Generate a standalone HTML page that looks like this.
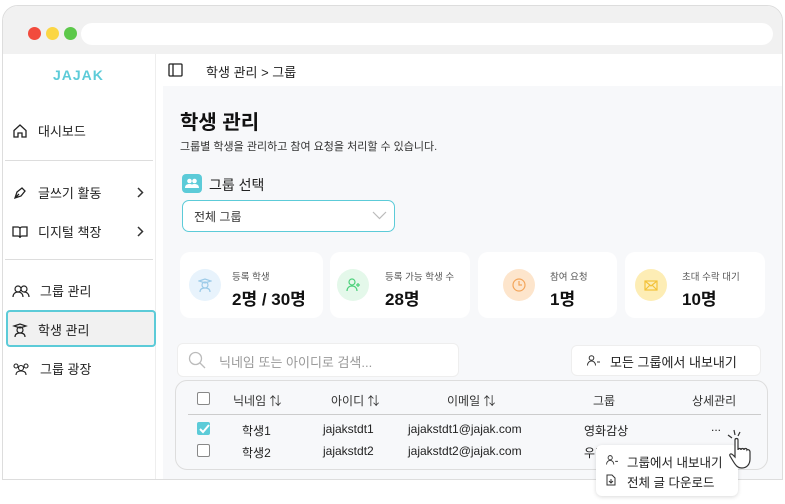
<!DOCTYPE html>
<html><head><meta charset="utf-8"><style>
*{box-sizing:border-box;margin:0;padding:0}
body{width:785px;height:504px;background:#fff;font-family:"Liberation Sans","Noto Sans CJK KR",sans-serif;position:relative;overflow:hidden;color:#222}
.abs{position:absolute}
.frame{left:2px;top:5px;width:781px;height:475px;border:1px solid #ddd;border-radius:16px 16px 0 0;overflow:hidden;background:#fff}
.tb{left:0;top:0;width:781px;height:48px;background:#f1f1f1}
.dot{width:13px;height:13px;border-radius:50%;top:21px}
.url{left:78px;top:17px;width:692px;height:22px;background:#fff;border-radius:11px}
.side{left:0;top:48px;width:153px;height:427px;background:#fff;border-right:1px solid #eee}
.main{left:160px;top:80px;width:621px;height:395px;background:#f7f8fa}
.nav{position:absolute;left:12px;font-size:13px;color:#222;display:flex;align-items:center;gap:10px}
.hr{position:absolute;left:5px;width:148px;height:1px;background:#ddd}
.card{background:#fff;border-radius:10px;height:66px;top:252px}
.ic{position:absolute;left:9px;top:17px;width:32px;height:32px;border-radius:50%}
.cl{position:absolute;left:52px;top:17px;font-size:9.5px;color:#555}
.cv{position:absolute;left:52px;top:33px;font-size:17px;font-weight:bold;color:#111}
.th{position:absolute;top:392px;font-size:12px;color:#333}
.td{position:absolute;font-size:12px;color:#222}
.cb{position:absolute;width:13px;height:13px;border:1px solid #888;border-radius:2px;background:#fff}
</style></head><body>
<div class="abs frame">
 <div class="abs tb"></div>
 <div class="abs dot" style="left:25px;background:#f24b3d"></div>
 <div class="abs dot" style="left:43px;background:#fbd644"></div>
 <div class="abs dot" style="left:61px;background:#5cc84a"></div>
 <div class="abs url"></div>
 <div class="abs side">
  <div class="abs" style="left:50px;top:13px;font-size:14px;font-weight:900;color:#5ccbd8;letter-spacing:1px">JAJAK</div>
 </div>
 <div class="abs main"></div>
</div>
<div class="nav" style="top:121px"><svg width="16" height="16" viewBox="0 0 16 16" fill="none" stroke="#222" stroke-width="1.3"><path d="M2 7.5 8 2l6 5.5V14H10V10H6v4H2z"/></svg>대시보드</div>
<div class="hr" style="top:160px"></div>
<div class="nav" style="top:183px"><svg width="16" height="16" viewBox="0 0 16 16" fill="none" stroke="#222" stroke-width="1.3"><path d="M3 13l2-6 5-4 3 3-4 5z M3 13l4-4"/></svg>글쓰기 활동</div>
<svg class="abs" style="left:137px;top:187px" width="7" height="11" viewBox="0 0 7 11" fill="none" stroke="#333" stroke-width="1.5"><path d="M1 1l4.5 4.5L1 10"/></svg>
<div class="nav" style="top:222px"><svg width="16" height="16" viewBox="0 0 16 16" fill="none" stroke="#222" stroke-width="1.3"><path d="M1 3h5a2 2 0 0 1 2 2v9a2 2 0 0 0-2-2H1zM15 3h-5a2 2 0 0 0-2 2v9a2 2 0 0 1 2-2h5z"/></svg>디지털 책장</div>
<svg class="abs" style="left:137px;top:226px" width="7" height="11" viewBox="0 0 7 11" fill="none" stroke="#333" stroke-width="1.5"><path d="M1 1l4.5 4.5L1 10"/></svg>
<div class="hr" style="top:259px"></div>
<div class="nav" style="top:281px"><svg width="18" height="16" viewBox="0 0 18 16" fill="none" stroke="#222" stroke-width="1.2"><circle cx="6" cy="6" r="3"/><circle cx="12" cy="6" r="3"/><path d="M1 14c0-3 2-5 5-5s5 2 5 5M12 9c3 0 5 2 5 5"/></svg>그룹 관리</div>
<div class="abs" style="left:6px;top:310px;width:150px;height:37px;background:#f1f1f1;border:2px solid #5ccbd8;border-radius:4px"></div>
<div class="nav" style="top:320px"><svg width="16" height="16" viewBox="0 0 16 16" fill="none" stroke="#222" stroke-width="1.2"><path d="M2 4l6-2 6 2-6 2z"/><circle cx="8" cy="8" r="3"/><path d="M3 15c0-3 2-4 5-4s5 1 5 4"/></svg>학생 관리</div>
<div class="nav" style="top:359px"><svg width="18" height="16" viewBox="0 0 18 16" fill="none" stroke="#222" stroke-width="1.1"><circle cx="4" cy="5" r="2"/><circle cx="9" cy="7" r="2.5"/><circle cx="14" cy="5" r="2"/><path d="M4 14c0-3 2-4 5-4s5 1 5 4"/></svg>그룹 광장</div>
<svg class="abs" style="left:168px;top:63px" width="15" height="14" viewBox="0 0 15 14" fill="none" stroke="#222" stroke-width="1.3"><rect x="1" y="1" width="13" height="12" rx="1"/><path d="M5 1v12"/></svg>
<div class="abs" style="left:206px;top:62px;font-size:13px">학생 관리 &gt; 그룹</div>
<div class="abs" style="left:180px;top:106px;font-size:20px;font-weight:bold;color:#111">학생 관리</div>
<div class="abs" style="left:180px;top:138px;font-size:11px;color:#333">그룹별 학생을 관리하고 참여 요청을 처리할 수 있습니다.</div>
<div class="abs" style="left:182px;top:174px;width:20px;height:19px;background:#5ccbd8;border-radius:4px"></div>
<svg class="abs" style="left:185px;top:178px" width="14" height="11" viewBox="0 0 14 11" fill="#fff"><circle cx="4.5" cy="3" r="2.3"/><circle cx="9.5" cy="3" r="2.3"/><path d="M0 10c0-3 2-4 4.5-4S9 7 9 10zM5 10c0-3 2-4 4.5-4S14 7 14 10z"/></svg>
<div class="abs" style="left:209px;top:175px;font-size:14px">그룹 선택</div>
<div class="abs" style="left:182px;top:200px;width:213px;height:32px;border:1.5px solid #5ccbd8;border-radius:7px;background:#fff"></div>
<div class="abs" style="left:194px;top:208px;font-size:12px;color:#333">전체 그룹</div>
<svg class="abs" style="left:372px;top:211px" width="15" height="9" viewBox="0 0 15 9" fill="none" stroke="#bbb" stroke-width="1.2"><path d="M1 1l6.5 6.5L14 1"/></svg>
<div class="abs card" style="left:180px;width:143px"><div class="ic" style="background:#e8f3fc"></div><svg class="abs" style="left:18px;top:26px" width="14" height="14" viewBox="0 0 14 14" fill="none" stroke="#9ccbe8" stroke-width="1.2"><path d="M1 3l6-2 6 2-6 2z"/><circle cx="7" cy="7" r="3"/><path d="M2 14c0-3 2-4 5-4s5 1 5 4"/></svg><div class="cl">등록 학생</div><div class="cv">2명 / 30명</div></div>
<div class="abs card" style="left:330px;width:140px"><div class="ic" style="left:7px;background:#e4f8ea"></div><svg class="abs" style="left:16px;top:26px" width="16" height="14" viewBox="0 0 16 14" fill="none" stroke="#4cd07a" stroke-width="1.2"><circle cx="6" cy="4" r="3"/><path d="M1 13c0-3 2-5 5-5s5 2 5 5M12 5v4M10 7h4"/></svg><div class="cl" style="left:55px">등록 가능 학생 수</div><div class="cv" style="left:55px">28명</div></div>
<div class="abs card" style="left:478px;width:139px"><div class="ic" style="left:25px;background:#fde5cc"></div><svg class="abs" style="left:34px;top:26px" width="14" height="14" viewBox="0 0 14 14" fill="none" stroke="#f3a55a" stroke-width="1.2"><circle cx="7" cy="7" r="6"/><path d="M7 3v4h3"/></svg><div class="cl" style="left:72px">참여 요청</div><div class="cv" style="left:72px">1명</div></div>
<div class="abs card" style="left:625px;width:140px"><div class="ic" style="left:10px;background:#fdedb5"></div><svg class="abs" style="left:19px;top:28px" width="14" height="11" viewBox="0 0 14 11" fill="none" stroke="#f3c23a" stroke-width="1.2"><rect x="1" y="1" width="12" height="9"/><path d="M1 1l6 5 6-5M1 10l4.5-4.5M13 10 8.5 5.5"/></svg><div class="cl" style="left:57px">초대 수락 대기</div><div class="cv" style="left:57px">10명</div></div>
<div class="abs" style="left:177px;top:343px;width:282px;height:34px;background:#fff;border:1px solid #eee;border-radius:6px"></div>
<svg class="abs" style="left:188px;top:351px" width="18" height="18" viewBox="0 0 18 18" fill="none" stroke="#bbb" stroke-width="1.3"><circle cx="7.5" cy="7.5" r="6"/><path d="M12 12l5 5"/></svg>
<div class="abs" style="left:219px;top:352px;font-size:13px;color:#999">닉네임 또는 아이디로 검색...</div>
<div class="abs" style="left:571px;top:345px;width:190px;height:31px;background:#fff;border:1px solid #eee;border-radius:6px"></div>
<svg class="abs" style="left:587px;top:355px" width="13" height="11" viewBox="0 0 13 11" fill="none" stroke="#333" stroke-width="1"><circle cx="4.5" cy="3" r="2.3"/><path d="M0.5 10.5c0-3 2-4.5 4-4.5s4 1.5 4 4.5M10 7h3"/></svg>
<div class="abs" style="left:610px;top:352px;font-size:13px;color:#222">모든 그룹에서 내보내기</div>
<div class="abs" style="left:175px;top:380px;width:593px;height:90px;border:1px solid #ddd;border-radius:12px;background:#f7f8fa"></div>
<div class="cb" style="left:197px;top:392px"></div>
<div class="th" style="left:233px">닉네임 ⇅</div>
<div class="th" style="left:331px">아이디 ⇅</div>
<div class="th" style="left:447px">이메일 ⇅</div>
<div class="th" style="left:593px">그룹</div>
<div class="th" style="left:692px">상세관리</div>
<div class="abs" style="left:188px;top:414px;width:573px;height:1px;background:#ccc"></div>
<div class="cb" style="left:197px;top:422px;background:#5ccbd8;border-color:#5ccbd8"></div>
<svg class="abs" style="left:199px;top:424px" width="11" height="10" viewBox="0 0 11 10" fill="none" stroke="#fff" stroke-width="2"><path d="M1 5l3 3 6-7"/></svg>
<div class="cb" style="left:197px;top:444px"></div>
<div class="td" style="left:242px;top:422px">학생1</div>
<div class="td" style="left:323px;top:422px">jajakstdt1</div>
<div class="td" style="left:408px;top:422px">jajakstdt1@jajak.com</div>
<div class="td" style="left:584px;top:422px">영화감상</div>
<div class="td" style="left:711px;top:420px">...</div>
<div class="td" style="left:242px;top:444px">학생2</div>
<div class="td" style="left:323px;top:444px">jajakstdt2</div>
<div class="td" style="left:408px;top:444px">jajakstdt2@jajak.com</div>
<div class="td" style="left:584px;top:444px">우리반</div>
<div class="abs" style="left:596px;top:445px;width:142px;height:51px;background:#fff;border-radius:6px;box-shadow:0 1px 4px rgba(0,0,0,.15)"></div>
<svg class="abs" style="left:606px;top:455px" width="12" height="10" viewBox="0 0 13 11" fill="none" stroke="#333" stroke-width="1"><circle cx="4.5" cy="3" r="2.3"/><path d="M0.5 10.5c0-3 2-4.5 4-4.5s4 1.5 4 4.5M10 7h3"/></svg>
<div class="abs" style="left:627px;top:452px;font-size:12.5px">그룹에서 내보내기</div>
<svg class="abs" style="left:606px;top:474px" width="10" height="12" viewBox="0 0 10 12" fill="none" stroke="#333" stroke-width="1"><path d="M1 1h5l3 3v7H1zM5 5v4M3 7l2 2 2-2"/></svg>
<div class="abs" style="left:627px;top:472px;font-size:12.5px">전체 글 다운로드</div>
<svg class="abs" style="left:726px;top:429px" width="40" height="42" viewBox="0 0 40 42" fill="#fff" stroke="#333" stroke-width="1.2"><path d="M2 6l4 3M8 1l1 5M14 3l-2 4" fill="none"/><path d="M9 11c0-2 3-2 3 0v10c0-2 3-2 3 0 0-2 3-2 3 0 0-2 3-2 3 0 1-1 3 0 3 2v7c0 5-3 9-8 9-4 0-6-2-9-7l-3-5c-1-2 1-3 3-1l2 2z"/></svg>
</body></html>
